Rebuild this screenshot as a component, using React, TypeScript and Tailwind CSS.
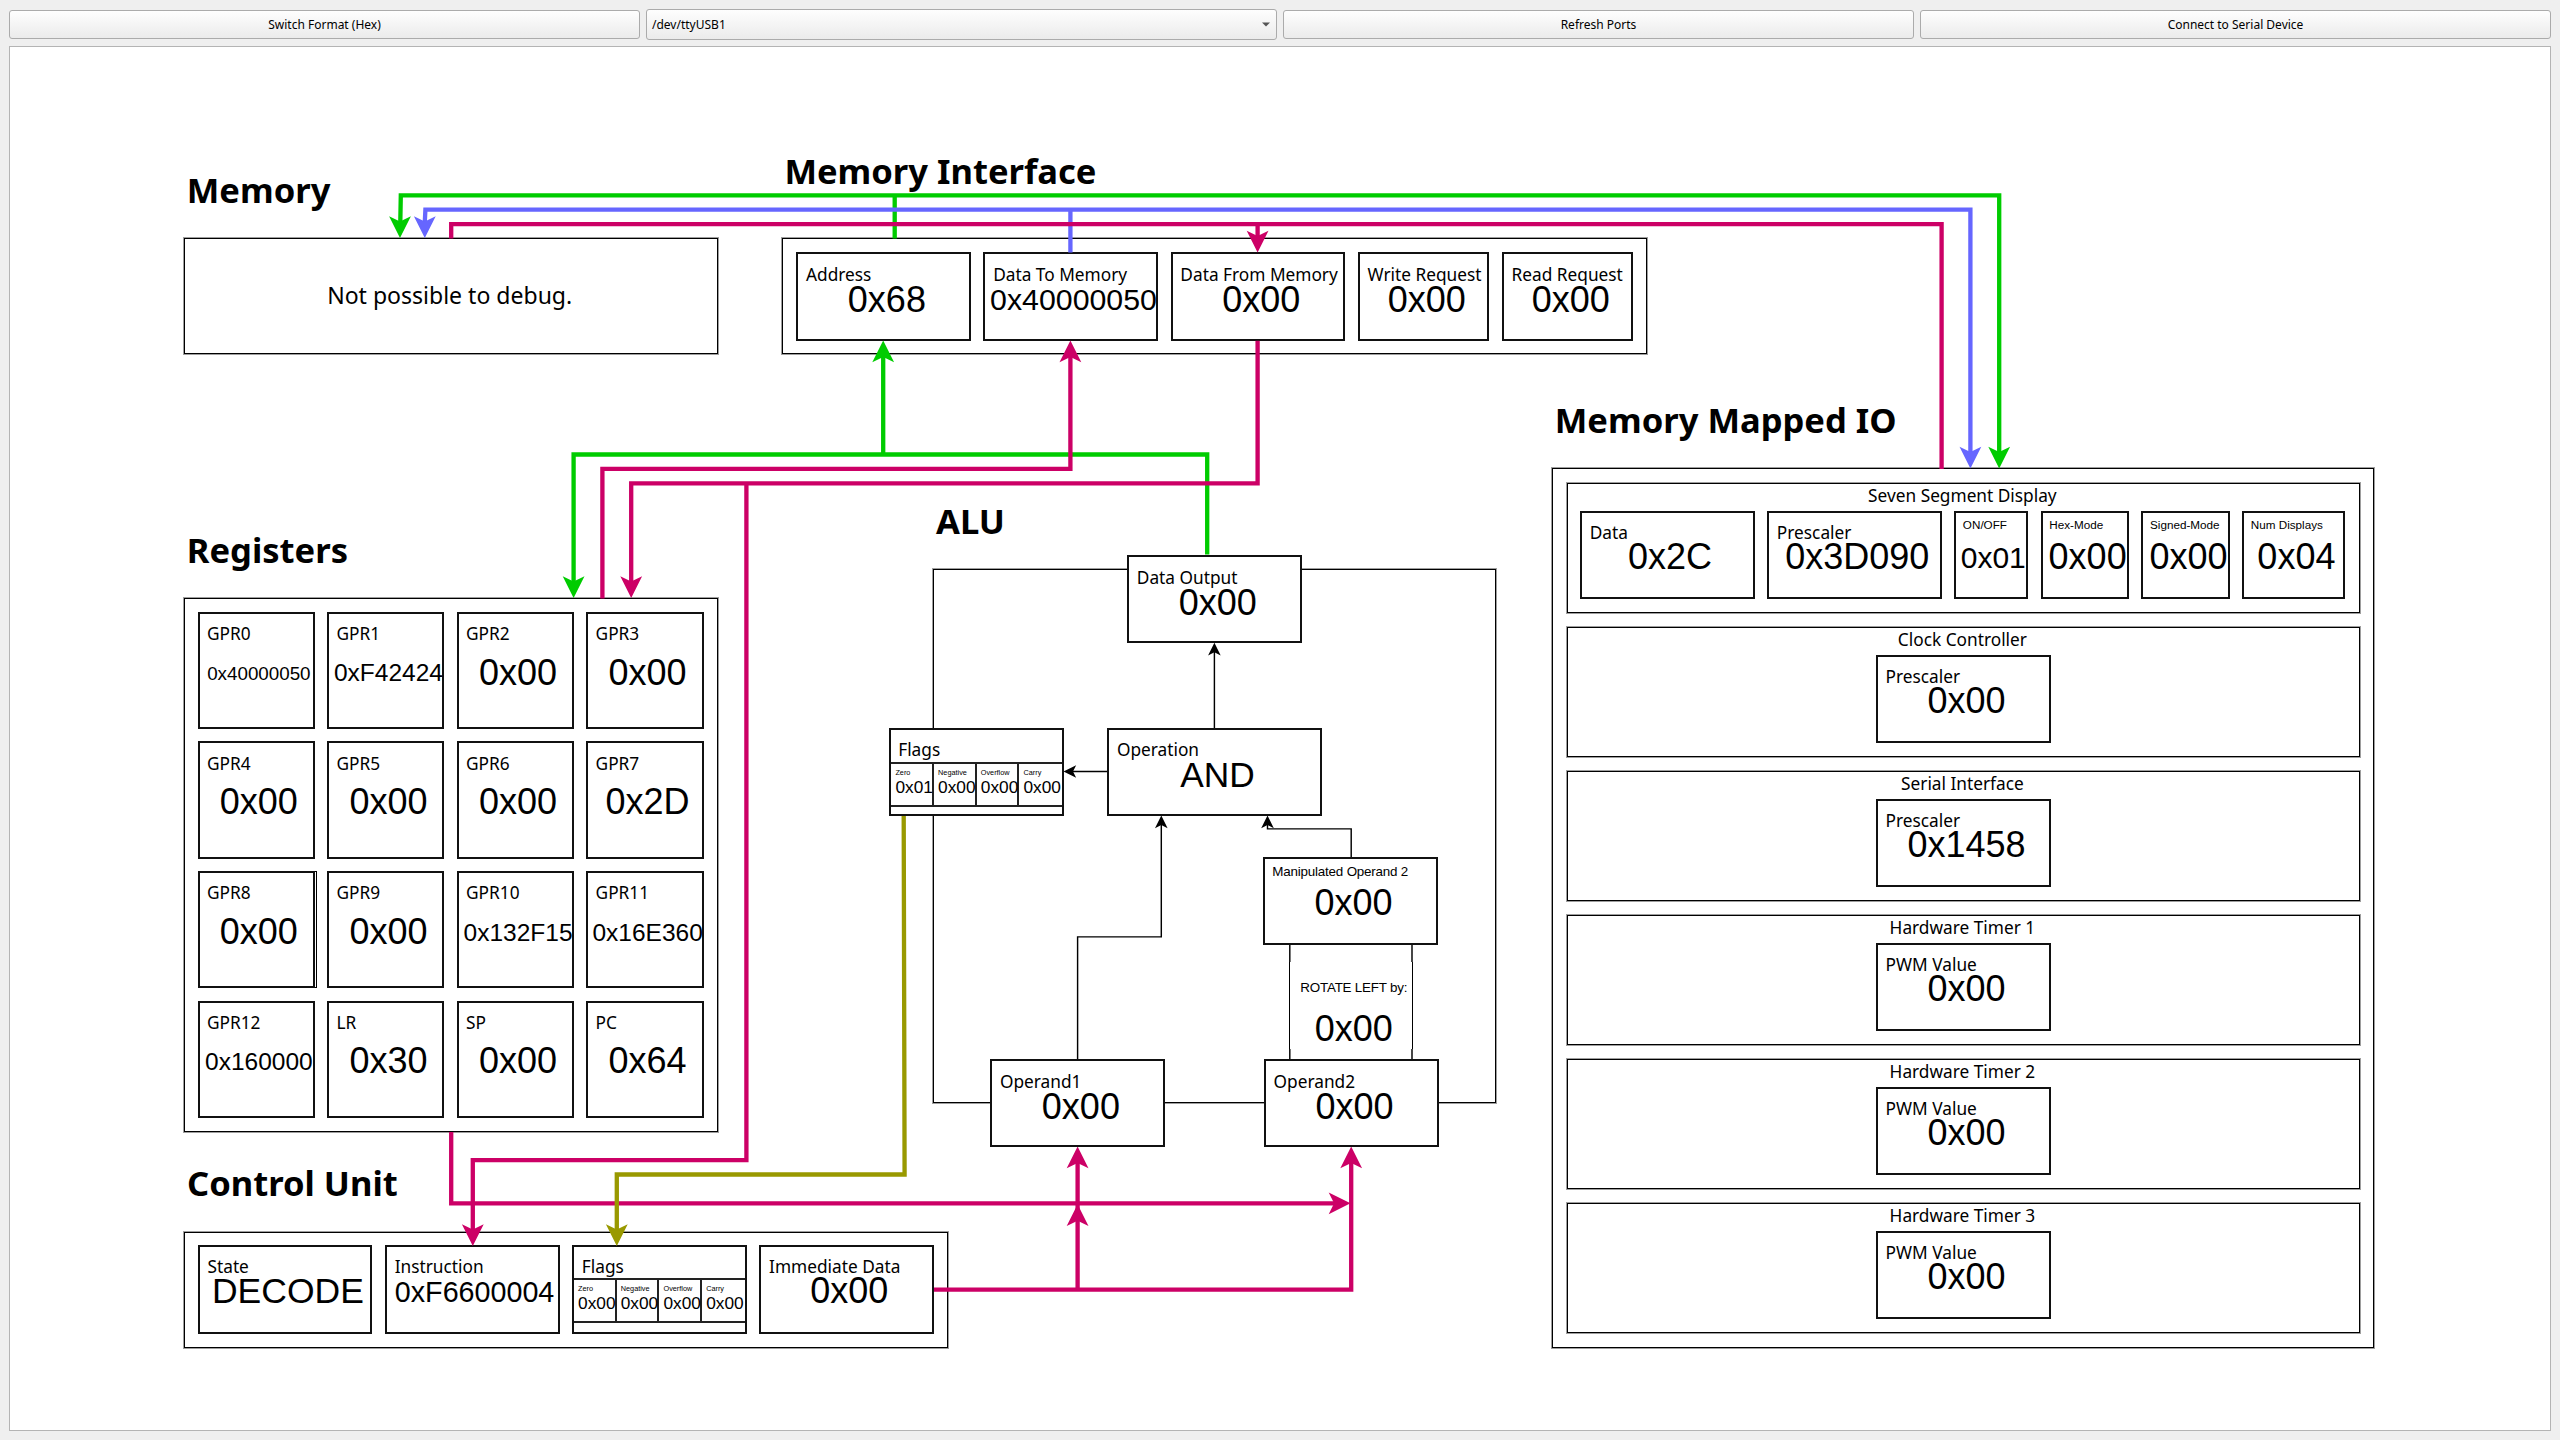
import type { ReactNode } from "react";

/* Diagram units are 1.44 px, measured from the top left corner of the Memory block. */
const U = 1.44;
const px = (u: number) => 184.8 + u * U;
const py = (u: number) => 238.5 + u * U;

const NOTO = "font-['Noto_Sans',sans-serif]";
const SANS = "font-['Liberation_Sans',Arial,sans-serif]";

/* Places one block or caption on the free canvas. */
function Place({ x, y, children }: { x: number; y: number; children: ReactNode }) {
  return (
    <div className="absolute" style={{ left: x, top: y }}>
      {children}
    </div>
  );
}

/* Thin outlined block that groups nodes. */
function Frame({ x, y, w, h, className, children }: {
  x: number;
  y: number;
  w: number;
  h: number;
  className?: string;
  children?: ReactNode;
}) {
  return (
    <Place x={px(x) - 0.5} y={py(y) - 0.5}>
      <div
        className={`border border-black shadow-[0_0_0_1px_rgba(0,0,0,0.38)] ${className ?? ""}`}
        style={{ width: w * U + 1, height: h * U + 1 }}
      >
        {children}
      </div>
    </Place>
  );
}

type NodeProps = {
  w?: number;
  h?: number;
  label: string;
  value?: string;
  size?: number;
  labelSize?: number;
  small?: boolean;
  track?: number;
  labelDx?: number;
  labelDy?: number;
  dx?: number;
  dy?: number;
  children?: ReactNode;
};

/* A register or signal: label in the upper left, value below it. */
function Node({
  w = 120,
  h = 60,
  label,
  value,
  size = 36,
  labelSize = 17.28,
  small,
  track,
  labelDx = 8.8,
  labelDy = 28,
  dx = 3.3,
  dy = 59.5,
  children,
}: NodeProps) {
  const ascent = (small ? 0.8465 : 0.888) * labelSize;
  const labelTop = labelDy - ascent - 1;
  const valueTop = dy - 1 - 0.8465 * size - (labelTop + labelSize);
  return (
    <div
      className="shrink-0 border-2 border-[#111] bg-white"
      style={{ width: w * U + 2, height: h * U + 2 }}
    >
      <div
        className={`whitespace-nowrap leading-none ${small ? SANS : NOTO}`}
        style={{ paddingTop: labelTop, paddingLeft: labelDx - 1, fontSize: labelSize, letterSpacing: track }}
      >
        {label}
      </div>
      {value && (
        <div
          className={`flex justify-center whitespace-nowrap leading-none ${SANS}`}
          style={{ marginTop: valueTop, paddingLeft: dx * 2, fontSize: size }}
        >
          {value}
        </div>
      )}
      {children}
    </div>
  );
}

/* A node that stands alone on the canvas. */
function FreeNode({ x, y, ...rest }: NodeProps & { x: number; y: number }) {
  return (
    <Place x={px(x) - 1} y={py(y) - 0.4}>
      <Node {...rest} />
    </Place>
  );
}

function FlagCells({ values, className }: { values: string[]; className: string }) {
  const names = ["Zero", "Negative", "Overflow", "Carry"];
  return (
    <div className={`grid h-[45px] grid-cols-4 divide-x-2 divide-[#222] border-y-2 border-[#222] ${className}`}>
      {names.map((name) => (
        <div key={name} className={`pl-1 pt-[5px] leading-none ${SANS}`}>
          <div className="text-[7.3px] leading-[8px]">{name}</div>
          <div className="mt-[2px] text-[17.3px] leading-none">{values[names.indexOf(name)]}</div>
        </div>
      ))}
    </div>
  );
}

const REGISTERS: { label: string; value: string; size?: number }[] = [
  { label: "GPR0", value: "0x40000050", size: 18.8 },
  { label: "GPR1", value: "0xF42424", size: 24.5 },
  { label: "GPR2", value: "0x00" },
  { label: "GPR3", value: "0x00" },
  { label: "GPR4", value: "0x00" },
  { label: "GPR5", value: "0x00" },
  { label: "GPR6", value: "0x00" },
  { label: "GPR7", value: "0x2D" },
  { label: "GPR8", value: "0x00" },
  { label: "GPR9", value: "0x00" },
  { label: "GPR10", value: "0x132F15", size: 24.5 },
  { label: "GPR11", value: "0x16E360", size: 24.5 },
  { label: "GPR12", value: "0x160000", size: 24.5 },
  { label: "LR", value: "0x30" },
  { label: "SP", value: "0x00" },
  { label: "PC", value: "0x64" },
];

const DEVICES = [
  { title: "Clock Controller", label: "Prescaler", value: "0x00" },
  { title: "Serial Interface", label: "Prescaler", value: "0x1458" },
  { title: "Hardware Timer 1", label: "PWM Value", value: "0x00" },
  { title: "Hardware Timer 2", label: "PWM Value", value: "0x00" },
  { title: "Hardware Timer 3", label: "PWM Value", value: "0x00" },
];

const GREEN = "#00CC00";
const BLUE = "#6666FF";
const PINK = "#CC0066";
const OLIVE = "#999900";

function Wire({ d, c }: { d: string; c: string }) {
  return <path d={d} stroke={c} strokeWidth={4.32} fill="none" />;
}

function Head({ x, y, r = 0, c, s = 1 }: { x: number; y: number; r?: number; c: string; s?: number }) {
  return (
    <path
      d="M0 0L-10.9 -21.8L0 -16.4L10.9 -21.8Z"
      fill={c}
      transform={`translate(${x} ${y}) rotate(${r}) scale(${s})`}
    />
  );
}

function Wires() {
  return (
    <svg className="pointer-events-none absolute left-0 top-0" width="2560" height="1440" viewBox="0 0 2560 1440">
      <Wire c={GREEN} d="M400.3 222L400.8 195.3H1999.2V452" />
      <Wire c={GREEN} d="M894.7 195.3V238.5" />
      <Head x={400} y={238} c={GREEN} />
      <Head x={1999.2} y={468.5} c={GREEN} />
      <Wire c={GREEN} d="M573.6 582V454.5H1207.2V554.6" />
      <Wire c={GREEN} d="M883.2 454.5V357" />
      <Head x={573.6} y={598} c={GREEN} />
      <Head x={883.2} y={340.5} r={180} c={GREEN} />

      <Wire c={BLUE} d="M424.8 222L425.4 209.7H1970.4V452" />
      <Wire c={BLUE} d="M1070.4 209.7V252.5" />
      <Head x={424.8} y={238} c={BLUE} />
      <Head x={1970.4} y={468.5} c={BLUE} />

      <Wire c={PINK} d="M451.2 238.5V224.1H1941.6V468.9" />
      <Wire c={PINK} d="M1257.6 224.1V237" />
      <Head x={1257.6} y={252.5} c={PINK} />
      <Wire c={PINK} d="M602.4 598.5V468.9H1070.4V357" />
      <Head x={1070.4} y={340.5} r={180} c={PINK} />
      <Wire c={PINK} d="M1257.6 340.8V483.3H631.2V582" />
      <Head x={631.2} y={598} c={PINK} />
      <Wire c={PINK} d="M746.4 483.3V1160.1H472.8V1230" />
      <Head x={472.8} y={1246} c={PINK} />
      <Wire c={PINK} d="M451.2 1131.9V1203.3H1334" />
      <Head x={1350.5} y={1203.3} r={-90} c={PINK} />
      <Wire c={PINK} d="M934 1289.7H1351.2V1163" />
      <Head x={1351.2} y={1146.5} r={180} c={PINK} />
      <Wire c={PINK} d="M1077.6 1289.7V1163" />
      <Head x={1077.6} y={1146.5} r={180} c={PINK} />
      <Head x={1077.6} y={1204.3} r={180} c={PINK} />

      <Wire c={OLIVE} d="M903.7 815.8L904.6 1174.5H616.8V1230" />
      <Head x={616.8} y={1246} c={OLIVE} />

      <g stroke="#000" strokeWidth="1.44" fill="none">
        <path d="M1214.4 728.1V650" />
        <path d="M1107.9 771.5H1072" />
        <path d="M1077.6 1059.3V936.9H1161.3V822" />
        <path d="M1351.2 857V828.9H1267.5V822" />
        <path d="M1289.8 945V962M1289.8 1049V1060M1412 945V962M1412 1049V1060" />
      </g>
      <path d="M1289.5 962V1049M1412.5 962V1049" stroke="#000" strokeWidth="1" />
      <Head x={1214.4} y={642.8} r={180} s={0.58} c="#000" />
      <Head x={1063.5} y={771.5} r={90} s={0.58} c="#000" />
      <Head x={1161.3} y={815.5} r={180} s={0.58} c="#000" />
      <Head x={1267.5} y={815.5} r={180} s={0.58} c="#000" />
    </svg>
  );
}

function Title({ x, y, children }: { x: number; y: number; children: ReactNode }) {
  return (
    <Place x={x} y={y - 29.7}>
      <h2 className={`whitespace-nowrap text-[34.56px] font-bold leading-none ${NOTO}`}>{children}</h2>
    </Place>
  );
}

function Device({ children, title }: { children: ReactNode; title: string }) {
  return (
    <section className="h-[130.6px] w-[793px] border border-black shadow-[0_0_0_1px_rgba(0,0,0,0.38)]">
      <h3 className={`pr-[1.6px] pt-[3.4px] text-center text-[17.28px] leading-none ${NOTO}`}>{title}</h3>
      <div className="mt-[6.5px]">{children}</div>
    </section>
  );
}

function Diagram() {
  const mode = { small: true, labelSize: 11.7, labelDx: 7.6, labelDy: 17.2, dx: 2.8, dy: 58 };
  return (
    <div className="absolute left-0 top-0 h-[1440px] w-[2560px]">
      <Frame x={520} y={230} w={390} h={370} />
      <Frame x={0} y={0} w={370} h={80} className="flex items-center justify-center pb-[1.6px] pr-[3px]">
        <p className={`text-[23.04px] leading-none ${NOTO}`}>Not possible to debug.</p>
      </Frame>

      <Frame x={415} y={0} w={600} h={80} className="flex gap-[12.4px] pl-[13.3px] pt-[13.3px]">
        <Node label="Address" value="0x68" dy={58.8} />
        <Node label="Data To Memory" value="0x40000050" size={30.3} dx={2.7} dy={57.2} />
        <Node label="Data From Memory" value="0x00" dy={58.8} />
        <Node w={90} label="Write Request" value="0x00" dy={58.8} />
        <Node w={90} label="Read Request" value="0x00" dy={58.8} />
      </Frame>

      <Frame
        x={0}
        y={250}
        w={370}
        h={370}
        className="grid grid-cols-[repeat(4,117.2px)] content-start gap-[12.4px] pl-[12.4px] pt-[12.8px]"
      >
        {REGISTERS.map((r) => (
          <div key={r.label} className={r.label === "GPR8" ? "w-[119.4px] border-y border-r border-black" : ""}>
            <div className={r.label === "GPR8" ? "-my-px" : ""}>
              <Node
                w={80}
                h={80}
                label={r.label}
                value={r.value}
                size={r.size}
                dx={2.6}
                dy={r.size ? (r.size < 20 ? 68 : 69.4) : 72.2}
                labelDy={27.6}
                labelDx={8.2}
              />
            </div>
          </div>
        ))}
      </Frame>

      <Frame x={0} y={690} w={530} h={80} className="flex gap-[12.4px] pl-[12.4px] pt-[12.7px]">
        <Node label="State" value="DECODE" size={35.5} dx={2.8} dy={57.4} labelDy={27} />
        <Node label="Instruction" value="0xF6600004" size={28.7} dx={2.3} dy={56} labelDy={27} />
        <Node label="Flags" labelDy={27}>
          <FlagCells values={["0x00", "0x00", "0x00", "0x00"]} className="mt-[3px]" />
        </Node>
        <Node label="Immediate Data" value="0x00" dx={2.6} dy={57.6} labelDy={27} />
      </Frame>

      <Frame
        x={950}
        y={160}
        w={570}
        h={610}
        className="flex flex-col items-start gap-[13.4px] pl-[13.4px] pt-[13.4px]"
      >
        <Device title="Seven Segment Display">
          <div className="flex gap-[12.4px] pl-[12.2px]">
            <Node label="Data" value="0x2C" dx={2.8} dy={58} labelDy={27.6} />
            <Node label="Prescaler" value="0x3D090" dx={2.8} dy={58} labelDy={27.6} />
            <Node {...mode} w={50} label="ON/OFF" value="0x01" size={30} dx={2} dy={56.4} />
            <Node {...mode} w={60} label="Hex-Mode" value="0x00" />
            <Node {...mode} w={60} label="Signed-Mode" value="0x00" />
            <Node {...mode} w={70} label="Num Displays" value="0x04" />
          </div>
        </Device>
        {DEVICES.map((d) => (
          <Device key={d.title} title={d.title}>
            <div className="flex justify-center">
              <Node label={d.label} value={d.value} dy={58} labelDy={27.7} />
            </div>
          </Device>
        ))}
      </Frame>

      <Wires />

      <Title x={186.8} y={202.4}>Memory</Title>
      <Title x={784.4} y={183.8}>Memory Interface</Title>
      <Title x={186.8} y={562.6}>Registers</Title>
      <Title x={187} y={1195.9}>Control Unit</Title>
      <Title x={936} y={533.4}>ALU</Title>
      <Title x={1554.8} y={432.4}>Memory Mapped IO</Title>

      <FreeNode x={655} y={220} label="Data Output" value="0x00" />
      <FreeNode x={490} y={340} label="Flags" labelDx={7.8} labelDy={27.8}>
        <FlagCells values={["0x01", "0x00", "0x00", "0x00"]} className="mt-[3.6px]" />
      </FreeNode>
      <FreeNode x={641.2} y={340} w={148} label="Operation" value="AND" size={35.3} dx={2.9} dy={58.2} />
      <FreeNode
        x={749.7}
        y={429.6}
        label="Manipulated Operand 2"
        small
        labelSize={13.4}
        track={-0.2}
        labelDx={8}
        labelDy={19}
        value="0x00"
        dx={2.8}
        dy={58.2}
      />
      <Place x={1293.8} y={981.4}>
        <div className={`flex w-[120px] flex-col items-center whitespace-nowrap leading-none ${SANS}`}>
          <span className="text-[13.4px] leading-none tracking-[-0.2px]">ROTATE LEFT by:</span>
          <span className="mt-[16.4px] text-[36px] leading-none">0x00</span>
        </div>
      </Place>
      <FreeNode x={560} y={570} label="Operand1" value="0x00" dy={59.2} />
      <FreeNode x={750} y={570} label="Operand2" value="0x00" dy={59.2} />
    </div>
  );
}

const CONTROL =
  "flex items-center rounded-[3px] border border-[#ababab] bg-linear-to-b from-[#fefefe] to-[#ebebeb]";

function ToolButton({ children }: { children: ReactNode }) {
  return <button className={`${CONTROL} h-[29px] justify-center`}>{children}</button>;
}

export default function App() {
  return (
    <div className="relative flex h-[1440px] w-[2560px] flex-col overflow-hidden bg-[#efefef] p-[9px] font-['Noto_Sans',sans-serif] text-[12px] text-black">
      <div className="grid h-[31px] grid-cols-4 items-center gap-1.5">
        <ToolButton>Switch Format (Hex)</ToolButton>
        <div className={`${CONTROL} h-[31px] justify-between pl-[5px] pr-[6px]`}>
          <span>/dev/ttyUSB1</span>
          <svg width="8" height="5" viewBox="0 0 8 5">
            <path d="M0 0.5H8L4 4.5Z" fill="#555" />
          </svg>
        </div>
        <ToolButton>Refresh Ports</ToolButton>
        <ToolButton>Connect to Serial Device</ToolButton>
      </div>
      <div className="mt-[6px] flex-1 border border-[#b4b4b4] bg-white" />
      <Diagram />
    </div>
  );
}
